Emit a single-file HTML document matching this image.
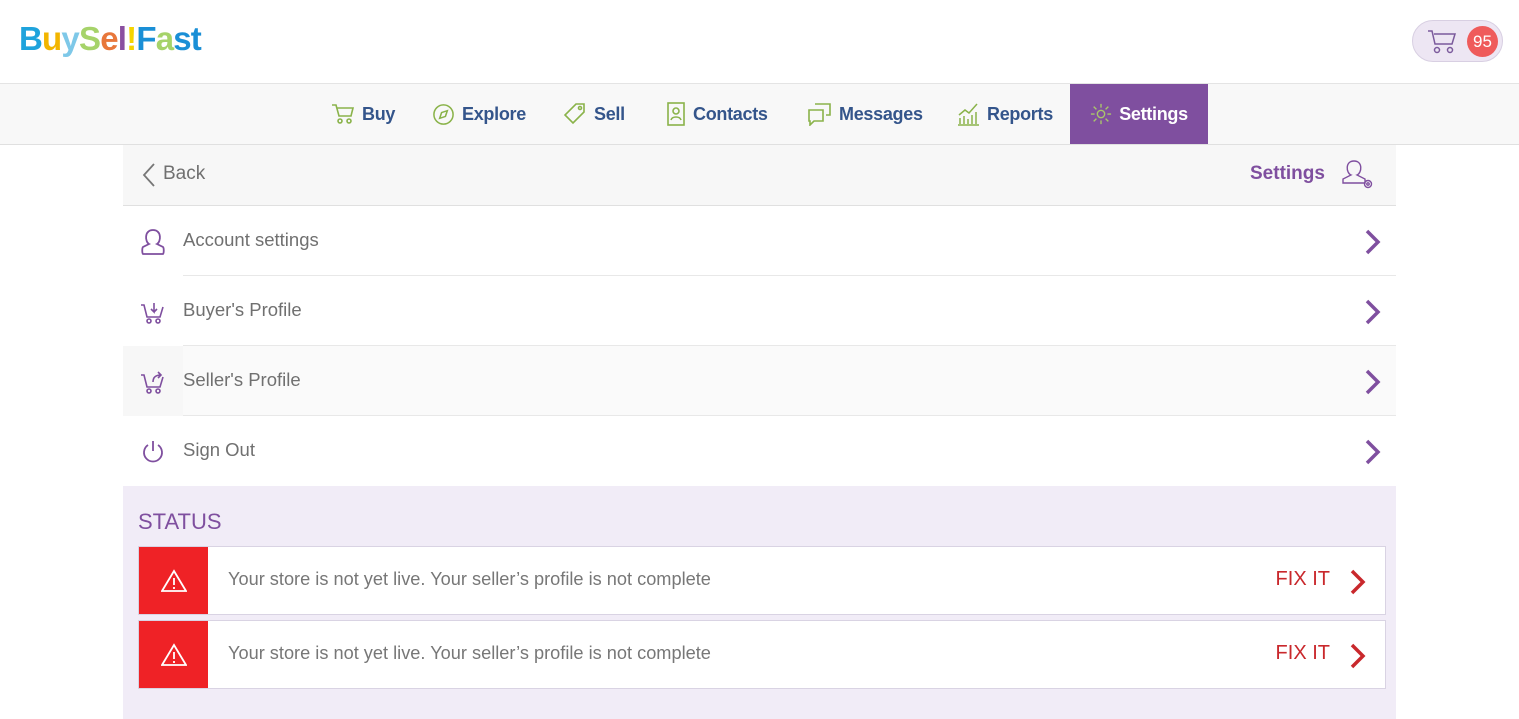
<!DOCTYPE html>
<html><head><meta charset="utf-8"><style>
*{margin:0;padding:0;box-sizing:border-box}
body{width:1519px;height:719px;overflow:hidden;background:#fff;font-family:"Liberation Sans",sans-serif;position:relative}
.abs{position:absolute}
.logo{left:19px;top:20px;font-size:33px;font-weight:bold;letter-spacing:-0.8px}
.nav{left:0;top:83px;width:1519px;height:62px;background:#f8f8f8;border-top:1px solid #e4e4e4;border-bottom:1px solid #e0e0e0}
.ni{position:absolute;top:0;height:60px;display:flex;align-items:center;font-size:18px;color:#34558b;font-weight:bold;letter-spacing:-0.3px}
.ni svg{margin-right:7px}
.set{left:1070px;width:138px;background:#7f4f9f;color:#fff;justify-content:center}
.hdr{left:123px;top:145px;width:1273px;height:61px;background:#f7f7f7;border-bottom:1px solid #e0e0e0}
.row{position:absolute;left:123px;width:1273px;height:70px}
.row .t{position:absolute;left:60px;top:23px;font-size:18.5px;color:#707070}
.row .d{position:absolute;left:60px;right:0;bottom:0;height:1px;background:#e8e8e8}
.row .ic{position:absolute;left:17px;top:22px}
.row .ch{position:absolute;right:14px;top:23px}
.status{left:123px;top:486px;width:1273px;height:233px;background:#f1ecf7}
.card{position:absolute;left:15px;width:1248px;height:69px;background:#fff;border:1px solid #d9d3e3}
.card .r{position:absolute;left:0;top:0;width:69px;height:100%;background:#ef2226;display:flex;align-items:center;justify-content:center}
.card .m{position:absolute;left:89px;top:22px;font-size:18.2px;color:#777}
.card .f{position:absolute;right:55px;top:21px;font-size:20px;color:#c9282c}
.card .fc{position:absolute;right:18px;top:22px}
</style></head><body>
<div class="abs logo"><span style="color:#1fa3dc">B</span><span style="color:#f2b500">u</span><span style="color:#7ec8e8">y</span><span style="color:#a6d36a">S</span><span style="color:#e8773b">e</span><span style="color:#8a4fa0">l</span><span style="color:#f5d400">!</span><span style="color:#1a8fd6">F</span><span style="color:#a6d36a">a</span><span style="color:#1a8fd6">st</span></div>
<div class="abs" style="left:1412px;top:20px;width:91px;height:42px;border-radius:21px;background:#ede6f3;border:1px solid #d8cfe2">
<svg class="abs" style="left:13px;top:8px" width="32" height="26" viewBox="0 0 32 26" fill="none" stroke="#7b5a9c" stroke-width="1.5"><path d="M2 2h4l3 13h17l3-10H8"/><circle cx="11" cy="21" r="2.5"/><circle cx="24" cy="21" r="2.5"/></svg>
<div class="abs" style="left:54px;top:5px;width:31px;height:31px;border-radius:50%;background:#ef5b5b;color:#fff;font-size:17px;text-align:center;line-height:31px">95</div></div>
<div class="abs nav">
<div class="ni" style="left:331px"><svg width="24" height="22" viewBox="0 0 24 22" fill="none" stroke="#8ab34a" stroke-width="1.6"><path d="M1 2h4l3 11h12l2-8H6"/><circle cx="9" cy="18" r="2"/><circle cx="18" cy="18" r="2"/></svg>Buy</div>
<div class="ni" style="left:432px"><svg width="23" height="23" viewBox="0 0 24 24" fill="none" stroke="#8ab34a" stroke-width="1.6"><circle cx="12" cy="12" r="10"/><path d="M16 8l-6 2-2 6 6-2z"/></svg>Explore</div>
<div class="ni" style="left:563px"><svg width="24" height="24" viewBox="0 0 24 24" fill="none" stroke="#8ab34a" stroke-width="1.6"><path d="M13 2h8v8L10 21 2 13z"/><circle cx="17" cy="6" r="1.5"/></svg>Sell</div>
<div class="ni" style="left:666px"><svg width="20" height="24" viewBox="0 0 20 24" fill="none" stroke="#8ab34a" stroke-width="1.6"><rect x="2" y="1" width="16" height="22"/><circle cx="10" cy="9" r="3"/><path d="M5 18c1-4 9-4 10 0"/></svg>Contacts</div>
<div class="ni" style="left:807px"><svg width="25" height="24" viewBox="0 0 25 24" fill="none" stroke="#8ab34a" stroke-width="1.6"><path d="M8 2h15v11h-4M2 8h14v11H7l-4 4v-4H2z"/></svg>Messages</div>
<div class="ni" style="left:956px"><svg width="24" height="24" viewBox="0 0 24 24" fill="none" stroke="#8ab34a" stroke-width="1.5"><path d="M2 23h21M4 22v-6M8 22v-8M12 22v-5M16 22v-9M20 22v-12M3 13l6-5 4 3 8-9"/></svg>Reports</div>
<div class="ni set"><svg width="22" height="22" viewBox="0 0 24 24" fill="none" stroke="#a9c66a" stroke-width="1.5"><circle cx="12" cy="12" r="4"/><path d="M12 1v4M12 19v4M1 12h4M19 12h4M4 4l3 3M17 17l3 3M4 20l3-3M17 7l3-3"/></svg>Settings</div>
</div>
<div class="abs hdr">
<svg class="abs" style="left:18px;top:17px" width="16" height="26" viewBox="0 0 16 26" fill="none" stroke="#777" stroke-width="1.8"><path d="M13 2L3 13l10 11"/></svg>
<div class="abs" style="left:40px;top:18px;font-size:19px;color:#707070">Back</div>
<div class="abs" style="left:1127px;top:18px;font-size:19px;color:#7f4f9f;font-weight:bold">Settings</div>
<svg class="abs" style="left:1217px;top:10px" width="38" height="38" viewBox="0 0 38 38" fill="none" stroke="#7f4f9f" stroke-width="1.4"><path d="M11 20c-5-2-6-14 3-14s8 12 3 14l8 4v4H3v-4z"/><circle cx="28" cy="29" r="3.5"/><circle cx="28" cy="29" r="1.2"/></svg>
</div>
<div class="row" style="top:206px"><svg class="ic" width="26" height="28" viewBox="0 0 26 28" fill="none" stroke="#7f4f9f" stroke-width="1.8"><path d="M9 16c-4-2-5-14 4-14s8 12 4 14l6 3c1 1 1 6 0 7H3c-1-1-1-6 0-7z"/></svg><div class="t">Account settings</div><svg class="ch" width="18" height="26" viewBox="0 0 18 26" fill="none" stroke="#7f4f9f" stroke-width="3.5"><path d="M3 2l11 11L3 24"/></svg><div class="d"></div></div>
<div class="row" style="top:276px"><svg class="ic" width="26" height="28" viewBox="0 0 26 28" fill="none" stroke="#7f4f9f" stroke-width="1.6"><path d="M1 7h3l3 12h13l3-10M14 5v9l-3-3M14 14l3-3"/><circle cx="9" cy="23" r="2"/><circle cx="18" cy="23" r="2"/></svg><div class="t">Buyer's Profile</div><svg class="ch" width="18" height="26" viewBox="0 0 18 26" fill="none" stroke="#7f4f9f" stroke-width="3.5"><path d="M3 2l11 11L3 24"/></svg><div class="d"></div></div>
<div class="row" style="top:346px;background:#fafafa"><div class="abs" style="left:0;top:0;width:60px;height:70px;background:#f7f7f7"></div><svg class="ic" width="26" height="28" viewBox="0 0 26 28" fill="none" stroke="#7f4f9f" stroke-width="1.6"><path d="M1 7h3l3 12h13l3-10M13 14c0-5 3-7 8-7M18 4l3 3-3 3"/><circle cx="9" cy="23" r="2"/><circle cx="18" cy="23" r="2"/></svg><div class="t">Seller's Profile</div><svg class="ch" width="18" height="26" viewBox="0 0 18 26" fill="none" stroke="#7f4f9f" stroke-width="3.5"><path d="M3 2l11 11L3 24"/></svg><div class="d"></div></div>
<div class="row" style="top:416px"><svg class="ic" width="26" height="28" viewBox="0 0 26 28" fill="none" stroke="#7f4f9f" stroke-width="1.8"><path d="M13 3v10M8 7a9 9 0 1 0 10 0"/></svg><div class="t">Sign Out</div><svg class="ch" width="18" height="26" viewBox="0 0 18 26" fill="none" stroke="#7f4f9f" stroke-width="3.5"><path d="M3 2l11 11L3 24"/></svg></div>
<div class="abs status">
<div class="abs" style="left:15px;top:23px;font-size:22px;color:#7f4f9f">STATUS</div>
<div class="card" style="top:60px"><div class="r"><svg width="26" height="24" viewBox="0 0 26 24" fill="none" stroke="#fff" stroke-width="1.8"><path d="M13 2L1 22h24z"/><path d="M13 9v7M13 18v2"/></svg></div><div class="m">Your store is not yet live. Your seller’s profile is not complete</div><div class="f">FIX IT</div><svg class="fc" width="18" height="26" viewBox="0 0 18 26" fill="none" stroke="#c9282c" stroke-width="3.5"><path d="M3 2l11 11L3 24"/></svg></div>
<div class="card" style="top:134px"><div class="r"><svg width="26" height="24" viewBox="0 0 26 24" fill="none" stroke="#fff" stroke-width="1.8"><path d="M13 2L1 22h24z"/><path d="M13 9v7M13 18v2"/></svg></div><div class="m">Your store is not yet live. Your seller’s profile is not complete</div><div class="f">FIX IT</div><svg class="fc" width="18" height="26" viewBox="0 0 18 26" fill="none" stroke="#c9282c" stroke-width="3.5"><path d="M3 2l11 11L3 24"/></svg></div>
</div>
</body></html>
